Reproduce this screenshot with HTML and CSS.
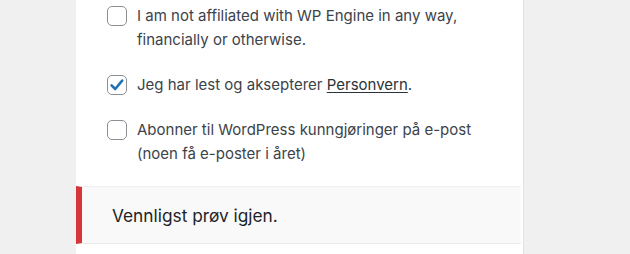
FILE: index.html
```html
<!DOCTYPE html>
<html lang="no">
<head>
<meta charset="utf-8">
<link rel="stylesheet" href="styles.css">
</head>
<body>
<div class="card">
  <div class="options">
    <label class="opt">
      <span class="box"></span>
      <span class="txt">I am not affiliated with WP Engine in any way,<br>financially or otherwise.</span>
    </label>
    <label class="opt">
      <span class="box checked"><svg viewBox="0 0 20 20" width="20" height="20"><path d="M4.6 10.4 L8.2 14 L15.2 5.6" fill="none" stroke="#2271b1" stroke-width="2.6" stroke-linecap="round" stroke-linejoin="round"/></svg></span>
      <span class="txt">Jeg har lest og aksepterer <a class="link" href="#">Personvern</a>.</span>
    </label>
    <label class="opt">
      <span class="box"></span>
      <span class="txt">Abonner til WordPress kunngjøringer på e-post<br>(noen få e-poster i året)</span>
    </label>
  </div>
  <div class="notice">Vennligst prøv igjen.</div>
  <div class="rest"></div>
</div>
</body>
</html>
```
FILE: styles.css
```css
html, body {
  margin: 0;
  padding: 0;
  background: #f0f0f1;
  height: 100%;
  overflow: hidden;
}
body {
  font-family: Inter, "Liberation Sans", Arial, sans-serif;
}
.card {
  margin-left: 76px;
  width: 447px;
  min-height: 254px;
  background: #fff;
  border-right: 1px solid #e2e2e4;
  box-sizing: content-box;
}
.options {
  padding: 4px 0 0 31px;
  display: flex;
  flex-direction: column;
  gap: 21px;
}
.opt {
  display: flex;
  align-items: flex-start;
  gap: 10px;
  font-size: 15px;
  line-height: 24px;
  color: #3c434a;
}
.box {
  flex: none;
  width: 20px;
  height: 20px;
  margin-top: 2px;
  box-sizing: border-box;
  border: 1.5px solid #8c8f94;
  border-radius: 5px;
  background: #fff;
  position: relative;
}
.box svg {
  position: absolute;
  left: -1.5px;
  top: -1.5px;
}
.link {
  color: #2c3338;
  text-decoration: underline;
  text-underline-offset: 2px;
}
.notice {
  margin-top: 20px;
  height: 58px;
  box-sizing: border-box;
  margin-right: 2px;
  background: #f9f9f9;
  border-left: 6px solid #d63638;
  border-top: 1px solid #efefef;
  border-bottom: 1px solid #e9e9e9;
  padding-left: 30px;
  display: flex;
  align-items: center;
  font-size: 17.3px;
  color: #1d2327;
}
```
